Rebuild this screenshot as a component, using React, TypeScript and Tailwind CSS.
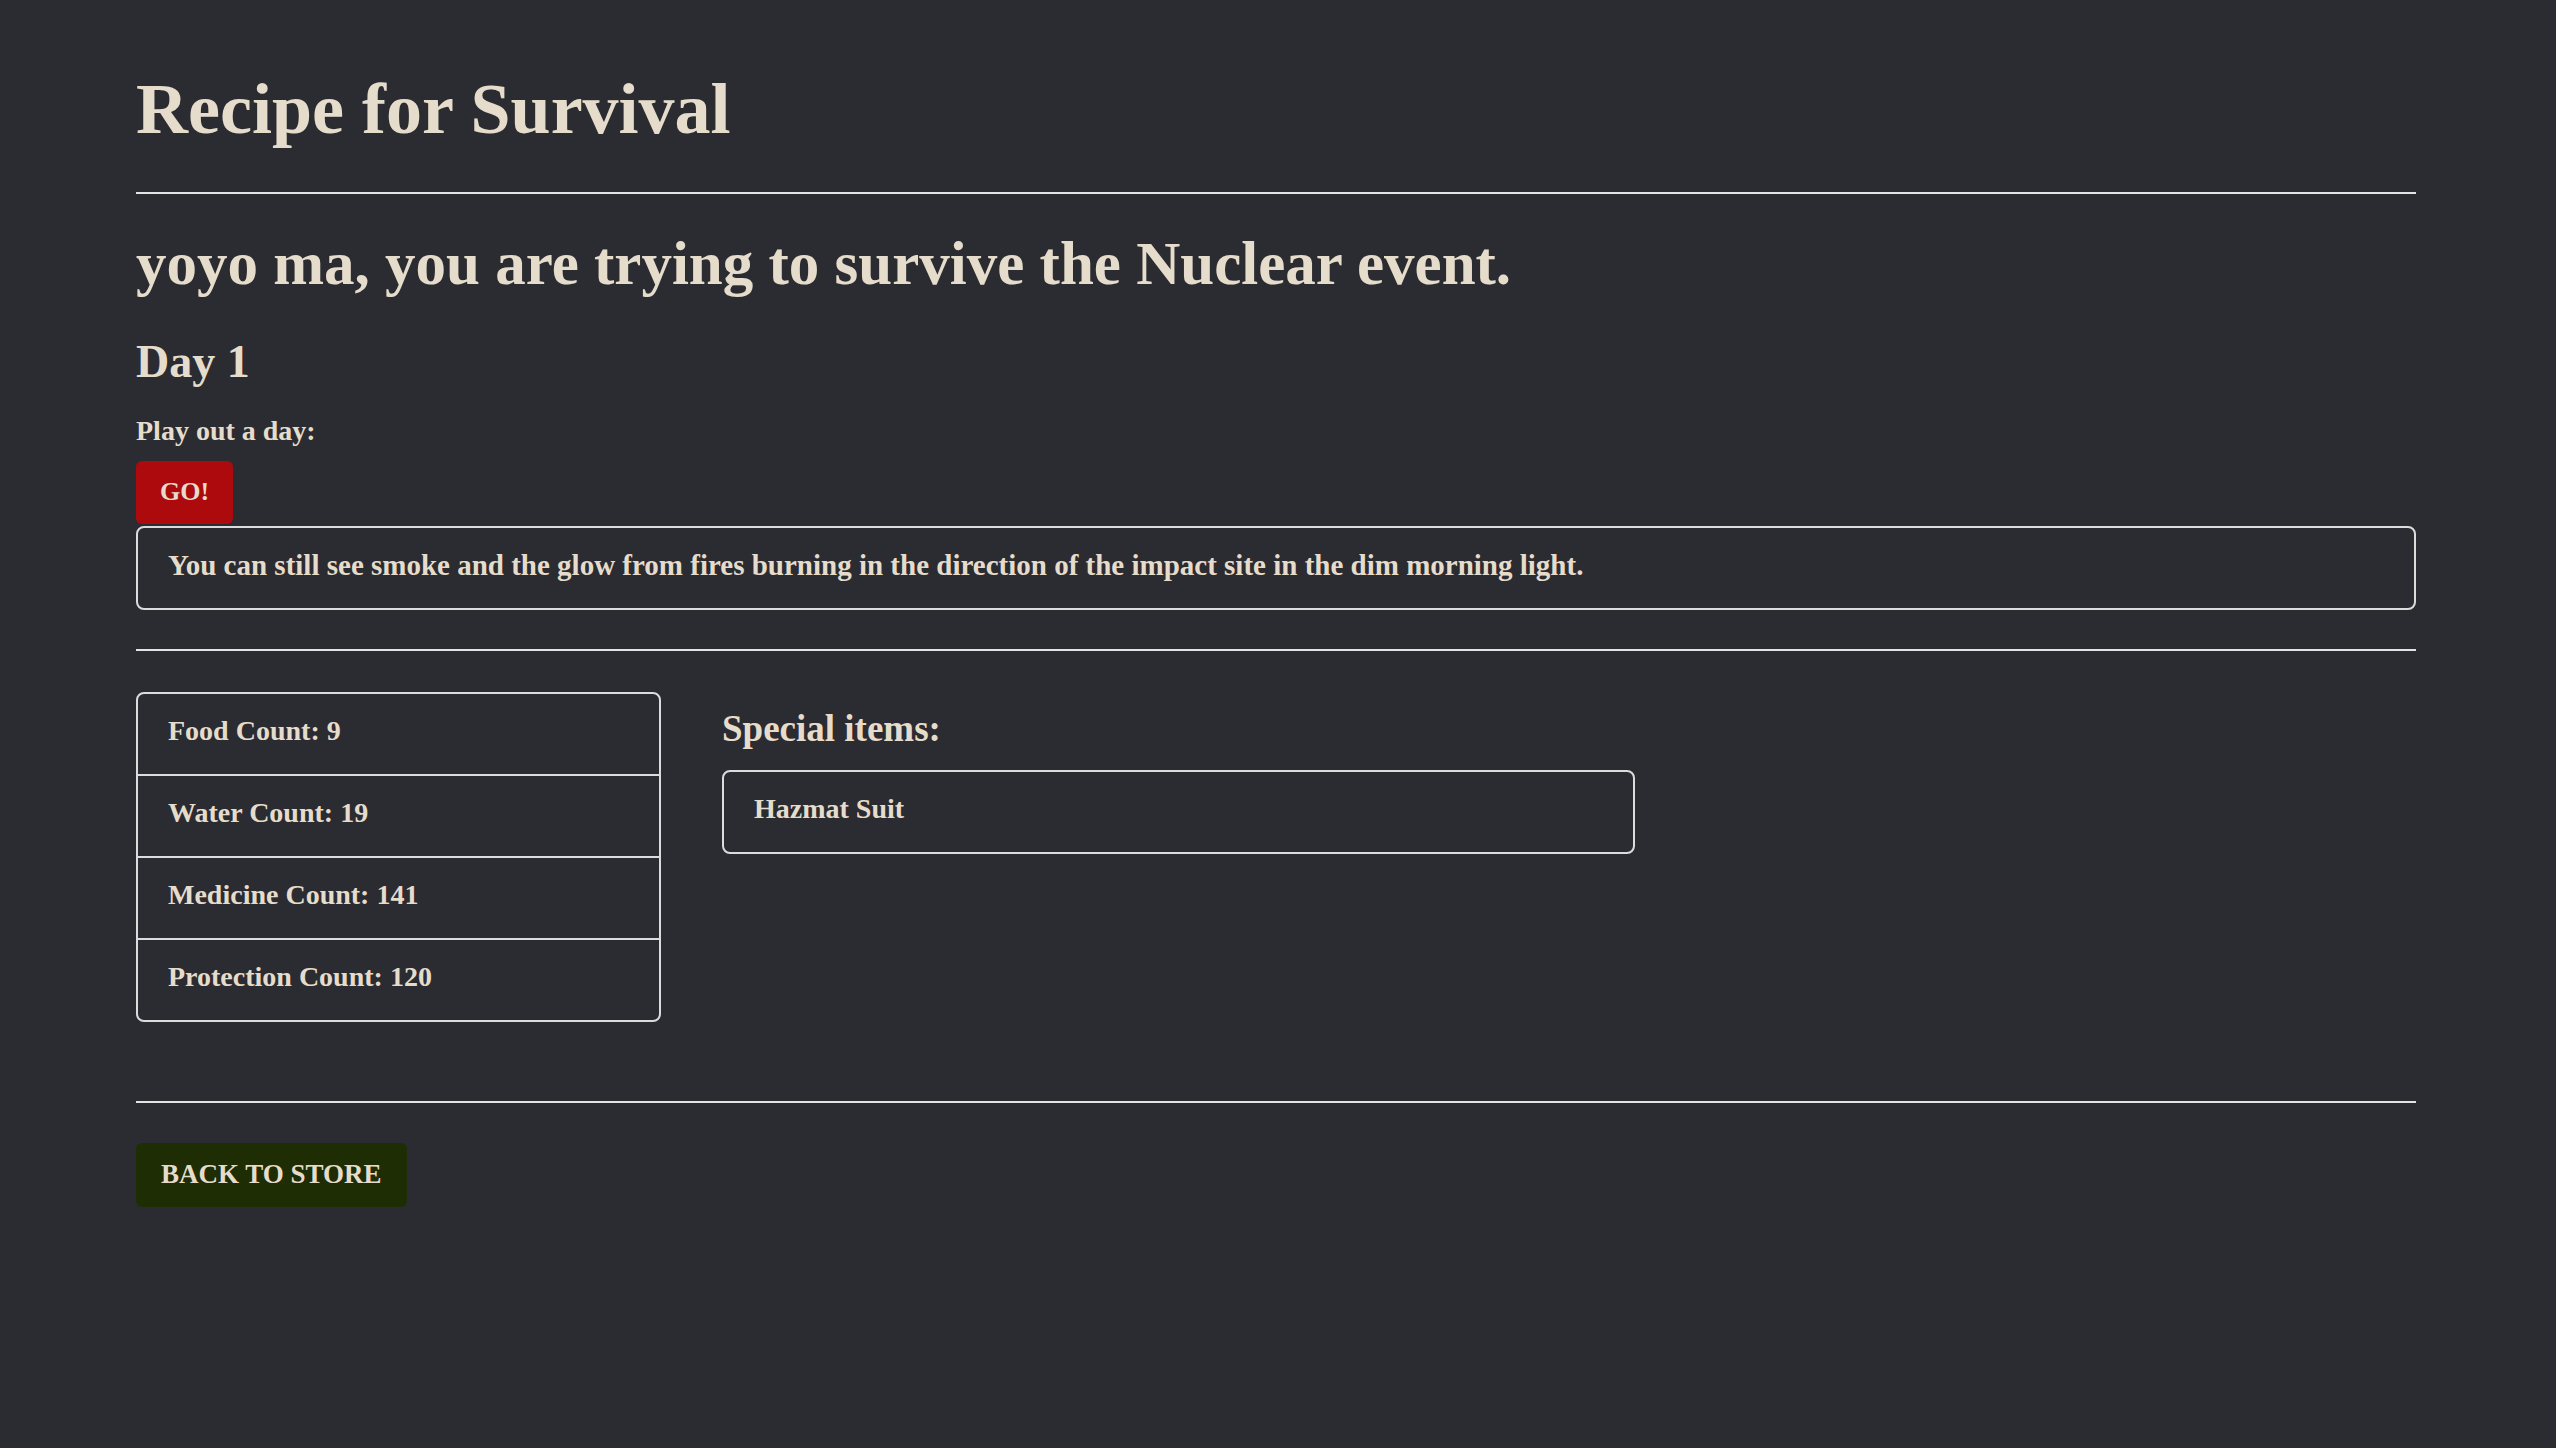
const stats = [
  { label: "Food Count", value: 9 },
  { label: "Water Count", value: 19 },
  { label: "Medicine Count", value: 141 },
  { label: "Protection Count", value: 120 },
];

const specialItems = ["Hazmat Suit"];

export default function App() {
  return (
    <main className="min-h-screen bg-[#2b2c31] text-[#e6dccb] font-['Liberation_Serif',serif] font-bold pl-[136px] pr-[140px] pt-[73px] pb-[200px]">
      {/* Header */}
      <h1 className="text-[72px] leading-none">Recipe for Survival</h1>
      <hr className="mt-[47px] border-0 border-t-2 border-[#e4e4e4]" />

      <h2 className="mt-[39px] text-[61px] leading-none">
        yoyo ma, you are trying to survive the Nuclear event.
      </h2>
      <h3 className="mt-[45px] text-[46px] leading-none">Day 1</h3>

      {/* Play a day */}
      <p className="mt-[32px] text-[28px] leading-none">Play out a day:</p>
      <button className="mt-[16px] block bg-[#ad0a0e] text-[26px] leading-none pt-[18px] pb-[19px] px-[24px] rounded-md">
        GO!
      </button>
      <div className="mt-[2px] border-2 border-[#dcdcdc] rounded-lg pl-[30px] pt-[22px] pb-[28px] text-[29px] leading-[30px]">
        You can still see smoke and the glow from fires burning in the direction of the impact site in the dim morning light.
      </div>

      <hr className="mt-[39px] border-0 border-t-2 border-[#e4e4e4]" />

      {/* Inventory */}
      <div className="mt-[41px] flex gap-[61px] items-start">
        <ul className="w-[525px] border-2 border-[#dcdcdc] rounded-lg">
          {stats.map((s, i) => (
            <li
              key={s.label}
              className={`pl-[30px] pt-[22px] pb-[28px] text-[28px] leading-[30px] ${i > 0 ? "border-t-2 border-[#dcdcdc]" : ""}`}
            >
              {s.label}: {s.value}
            </li>
          ))}
        </ul>
        <div className="flex flex-col">
          <h4 className="mt-[18px] text-[37px] leading-none">Special items:</h4>
          <ul className="mt-[23px] w-[913px] border-2 border-[#dcdcdc] rounded-lg">
            {specialItems.map((item) => (
              <li key={item} className="pl-[30px] pt-[22px] pb-[28px] text-[28px] leading-[30px]">
                {item}
              </li>
            ))}
          </ul>
        </div>
      </div>

      <hr className="mt-[79px] border-0 border-t-2 border-[#e4e4e4]" />

      <button className="mt-[40px] block bg-[#1e2d03] text-[27px] leading-none pt-[18px] pb-[19px] px-[25px] rounded-md uppercase">
        Back to Store
      </button>
    </main>
  );
}
